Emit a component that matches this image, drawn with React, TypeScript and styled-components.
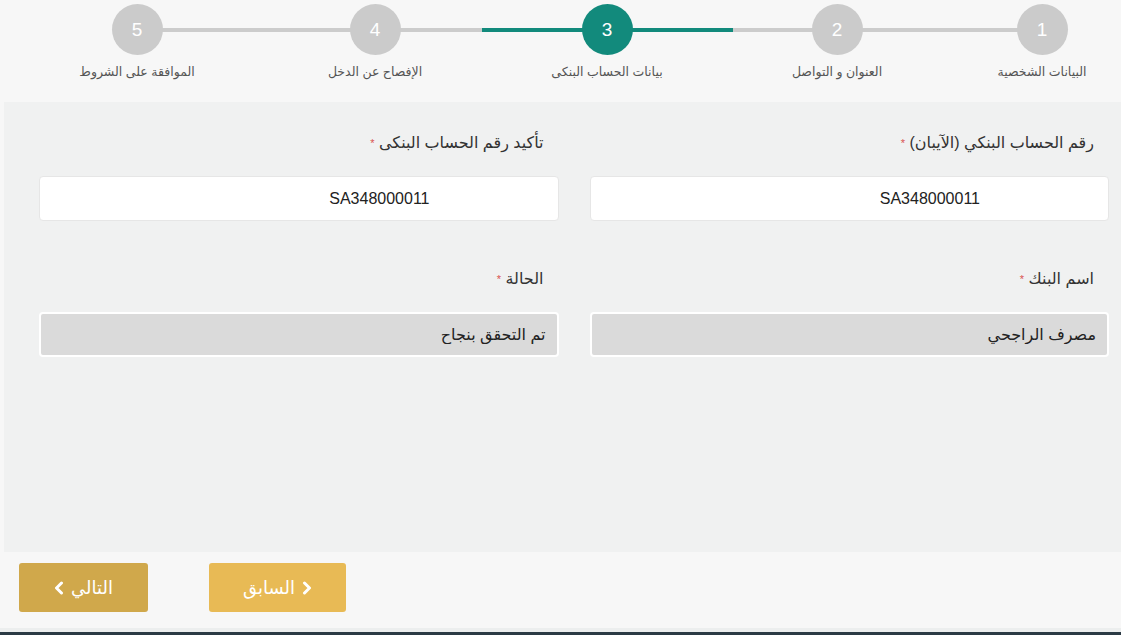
import styled, { createGlobalStyle } from 'styled-components';

const GlobalStyle = createGlobalStyle`
  * {
    box-sizing: border-box;
  }
  html,
  body {
    margin: 0;
    padding: 0;
    background-color: #f7f7f7;
    font-family: 'Liberation Sans', 'DejaVu Sans', sans-serif;
  }
`;

const steps = [
  { n: 1, label: 'البيانات الشخصية' },
  { n: 2, label: 'العنوان و التواصل' },
  { n: 3, label: 'بيانات الحساب البنكى' },
  { n: 4, label: 'الإفصاح عن الدخل' },
  { n: 5, label: 'الموافقة على الشروط' },
];

const ACTIVE = 3;

function Chevron({ dir }: { dir: 'left' | 'right' }): JSX.Element {
  return (
    <ChevronIcon width='10' height='14' viewBox='0 0 10 14'>
      <polyline
        points={dir === 'right' ? '2.5,2 7.5,7 2.5,12' : '7.5,2 2.5,7 7.5,12'}
        fill='none'
        stroke='#fff'
        strokeWidth='3'
        strokeLinecap='round'
        strokeLinejoin='round'
      />
    </ChevronIcon>
  );
}

function App(): JSX.Element {
  return (
    <Page dir='rtl'>
      <GlobalStyle />
      <Stepper>
        <Track />
        <ActiveTrack />
        <Steps>
          {steps.map((s) => (
            <Step key={s.n}>
              <Circle $active={s.n === ACTIVE}>{s.n}</Circle>
              <StepLabel>{s.label}</StepLabel>
            </Step>
          ))}
        </Steps>
      </Stepper>

      <Panel>
        <FormGrid>
          <Field>
            <Label>
              رقم الحساب البنكي (الآيبان) <Required>*</Required>
            </Label>
            <Input value='SA348000011' readOnly dir='rtl' />
          </Field>
          <Field>
            <Label>
              تأكيد رقم الحساب البنكى <Required>*</Required>
            </Label>
            <Input value='SA348000011' readOnly dir='rtl' />
          </Field>
          <Field>
            <Label>
              اسم البنك <Required>*</Required>
            </Label>
            <DisabledInput value='مصرف الراجحي' disabled />
          </Field>
          <Field>
            <Label>
              الحالة <Required>*</Required>
            </Label>
            <DisabledInput value='تم التحقق بنجاح' disabled />
          </Field>
        </FormGrid>
      </Panel>

      <Footer>
        <NavButton $tone='light'>
          <Chevron dir='right' />
          <span>السابق</span>
        </NavButton>
        <NavButton $tone='dark'>
          <span>التالي</span>
          <Chevron dir='left' />
        </NavButton>
      </Footer>
      <BottomBar />
    </Page>
  );
}

export default App;

const Page = styled.div`
  width: 1121px;
  height: 635px;
  display: flex;
  flex-direction: column;
  overflow: hidden;
  background-color: #f7f7f7;
`;

const Stepper = styled.div`
  position: relative;
  height: 102px;
  flex-shrink: 0;
`;

const Track = styled.div`
  position: absolute;
  top: 28px;
  left: 137px;
  width: 905px;
  height: 4px;
  background-color: #cccccc;
`;

const ActiveTrack = styled.div`
  position: absolute;
  top: 28px;
  left: 482px;
  width: 251px;
  height: 4px;
  background-color: #128a7c;
`;

const Steps = styled.div`
  position: relative;
  display: grid;
  grid-template-columns: 158px 252px 208px 256px 220px;
  padding-top: 4px;
`;

const Step = styled.div`
  display: flex;
  flex-direction: column;
  align-items: center;
`;

const Circle = styled.div<{ $active: boolean }>`
  width: 51px;
  height: 51px;
  border-radius: 50%;
  display: flex;
  align-items: center;
  justify-content: center;
  background-color: ${(p) => (p.$active ? '#128a7c' : '#cbcbcb')};
  color: #fff;
  font-family: 'Liberation Sans', sans-serif;
  font-size: 19px;
`;

const StepLabel = styled.div`
  margin-top: 9px;
  font-size: 12.5px;
  line-height: 16px;
  color: #555;
  white-space: nowrap;
`;

const Panel = styled.div`
  height: 450px;
  flex-shrink: 0;
  margin-left: 4px;
  background-color: #f0f1f1;
  padding: 30px 12px 0 35px;
`;

const FormGrid = styled.div`
  display: grid;
  grid-template-columns: 1fr 1fr;
  column-gap: 31px;
  row-gap: 47px;
`;

const Field = styled.div`
  display: flex;
  flex-direction: column;
`;

const Label = styled.label`
  padding-right: 15px;
  font-size: 16px;
  line-height: 22px;
  color: #333;
  margin-bottom: 22px;
`;

const Required = styled.span`
  color: #d9534f;
  font-size: 11px;
  vertical-align: top;
`;

const Input = styled.input`
  height: 45px;
  width: 100%;
  border: 1px solid #e6e6e6;
  border-radius: 4px;
  background-color: #fff;
  padding: 0 128px 0 12px;
  font-family: 'Liberation Sans', sans-serif;
  font-size: 16px;
  color: #222;
  outline: none;
`;

const DisabledInput = styled.input`
  height: 45px;
  width: 100%;
  border: 2px solid #fff;
  border-radius: 4px;
  background-color: #dadada;
  padding: 0 11px;
  font-family: 'Liberation Sans', 'DejaVu Sans', sans-serif;
  font-size: 16px;
  color: #222;
  outline: none;
  opacity: 1;
  -webkit-text-fill-color: #222;
`;

const Footer = styled.div`
  height: 76px;
  flex-shrink: 0;
  display: flex;
  justify-content: flex-end;
  align-items: flex-start;
  gap: 61px;
  padding: 11px 0 0 19px;
`;

const NavButton = styled.button<{ $tone: 'light' | 'dark' }>`
  height: 49px;
  width: ${(p) => (p.$tone === 'light' ? '137px' : '129px')};
  border: none;
  border-radius: 3px;
  background-color: ${(p) => (p.$tone === 'light' ? '#e8ba55' : '#d0a84b')};
  color: #fff;
  display: flex;
  align-items: center;
  justify-content: center;
  gap: 7px;
  font-family: 'DejaVu Sans', sans-serif;
  font-size: 18px;
  font-weight: 400;
  cursor: pointer;
`;

const ChevronIcon = styled.svg`
  display: block;
  flex-shrink: 0;
`;

const BottomBar = styled.div`
  flex: 1;
  border-top: 4px solid #eceeee;
  background-color: #2b3a44;
`;
